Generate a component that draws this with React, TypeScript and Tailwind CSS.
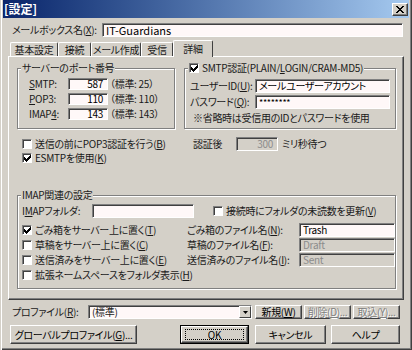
import React from "react";

type Kids = { children?: React.ReactNode };

function U({ children }: Kids) {
  return <span className="underline decoration-1 underline-offset-[1px]">{children}</span>;
}

function Field({
  className = "",
  value = "",
  disabled = false,
  right = false,
}: {
  className?: string;
  value?: string;
  disabled?: boolean;
  right?: boolean;
}) {
  return (
    <div
      className={`flex items-center shrink-0 border border-t-[#808080] border-l-[#808080] border-r-white border-b-white shadow-[inset_1px_1px_0_#404040] ${
        disabled ? "bg-[#d4d0c8] text-[#8c8c8c]" : "bg-[#fff8f8] text-black"
      } ${right ? "justify-end pr-[4px]" : "pl-[3px]"} ${className}`}
    >
      {value}
    </div>
  );
}

function Check({ on = false }: { on?: boolean }) {
  return (
    <span className="w-[10px] h-[10px] shrink-0 bg-white border border-t-[#808080] border-l-[#808080] border-r-white border-b-white shadow-[inset_1px_1px_0_#404040] flex items-center justify-center">
      {on && (
        <svg width="7" height="7" viewBox="0 0 7 7" className="ml-[1px] mt-[1px]">
          <path
            d="M0 2h1v3H0zM1 3h1v3H1zM2 4h1v3H2zM3 3h1v3H3zM4 2h1v3H4zM5 1h1v3H5zM6 0h1v3H6z"
            fill="#000"
          />
        </svg>
      )}
    </span>
  );
}

function Btn({
  children,
  className = "",
  disabled = false,
}: Kids & { className?: string; disabled?: boolean }) {
  return (
    <div
      className={`flex items-center justify-center shrink-0 bg-[#d4d0c8] border border-t-white border-l-white border-r-[#404040] border-b-[#404040] shadow-[inset_-1px_-1px_0_#808080] ${
        disabled ? "text-[#808080] [text-shadow:1px_1px_0_#fff]" : "text-black"
      } ${className}`}
    >
      {children}
    </div>
  );
}

function Group({
  title,
  className = "",
  children,
}: Kids & { title: React.ReactNode; className?: string }) {
  return (
    <div
      className={`relative shrink-0 border border-[#808080] shadow-[inset_1px_1px_0_#fff,1px_1px_0_#fff] ${className}`}
    >
      <div className="absolute -top-[7px] left-[3px] px-[1px] h-[12px] flex items-center bg-[#d4d0c8]">
        {title}
      </div>
      {children}
    </div>
  );
}

function Tab({ children, sel = false, className = "" }: Kids & { sel?: boolean; className?: string }) {
  return sel ? (
    <div
      className={`relative z-10 -mb-px h-[17px] flex items-center justify-center bg-[#d4d0c8] border-t border-l border-r border-t-white border-l-white border-r-[#404040] rounded-t-[2px] ${className}`}
    >
      {children}
    </div>
  ) : (
    <div
      className={`h-[14px] flex items-center justify-center border-t border-l border-r border-t-white border-l-white border-r-[#404040] rounded-t-[2px] ${className}`}
    >
      {children}
    </div>
  );
}

export default function App() {
  return (
    <div className="w-[412px] h-[350px] overflow-hidden whitespace-nowrap bg-[#d4d0c8] text-[#1a1a1a] text-[10px] leading-none tracking-[-0.3px] font-['Noto_Sans_CJK_JP','Noto_Sans',sans-serif] [font-feature-settings:'palt'] shadow-[inset_1px_0_0_#d4d0c8,inset_2px_0_0_#fff,inset_-1px_-1px_0_#404040,inset_-2px_-2px_0_#808080] flex flex-col">
      {/* title bar */}
      <div className="h-[18px] ml-[3px] mr-[3px] flex items-center justify-between bg-linear-to-r from-[#0a246a] to-[#a6caf0]">
        <span className="pl-[1px] text-white text-[12px] font-bold tracking-normal">[設定]</span>
        <div className="mr-[1px] w-[16px] h-[13px] flex items-center justify-center bg-[#d4d0c8] border border-t-white border-l-white border-r-[#404040] border-b-[#404040] shadow-[inset_-1px_-1px_0_#808080]">
          <svg width="8" height="7" viewBox="0 0 8 7">
            <path
              d="M0 0h2v1H0zM6 0h2v1H6zM1 1h2v1H1zM5 1h2v1H5zM2 2h4v1H2zM3 3h2v1H3zM2 4h4v1H2zM1 5h2v1H1zM5 5h2v1H5zM0 6h2v1H0zM6 6h2v1H6z"
              fill="#000"
            />
          </svg>
        </div>
      </div>

      {/* mailbox name */}
      <div className="mt-[5px] h-[14px] flex items-center">
        <span className="ml-[12px] w-[90px]">
          メールボックス名(<U>X</U>):
        </span>
        <Field className="w-[301px] h-[14px] text-[11px] tracking-normal" value="IT-Guardians" />
      </div>

      {/* tabs */}
      <div className="mt-[3px] ml-[10px] flex items-end h-[16px]">
        <Tab className="w-[48px]">基本設定</Tab>
        <Tab className="w-[33px]">接続</Tab>
        <Tab className="w-[50px]">メール作成</Tab>
        <Tab className="w-[32px]">受信</Tab>
        <Tab sel className="w-[40px]">詳細</Tab>
      </div>

      {/* panel */}
      <div className="ml-[8px] w-[396px] h-[244px] border border-t-white border-l-white border-r-[#404040] border-b-[#404040] shadow-[inset_-1px_-1px_0_#808080] flex flex-col">
        <div className="mt-[11px] ml-[8px] flex gap-[9px]">
          <Group title="サーバーのポート番号" className="w-[158px] h-[61px]">
            <div className="pt-[7px] pl-[11px] flex flex-col">
              {[
                [<><U>S</U>MTP:</>, "587", "（標準: 25）"],
                [<><U>P</U>OP3:</>, "110", "（標準: 110）"],
                [<>IMAP<U>4</U>:</>, "143", "（標準: 143）"],
              ].map(([label, v, std], i) => (
                <div key={i} className="h-[15px] flex items-center">
                  <span className="w-[39px]">{label}</span>
                  <Field className="w-[40px] h-[12px]" value={v as string} right />
                  <span className="ml-[2px]">{std}</span>
                </div>
              ))}
            </div>
          </Group>
          <Group
            title={
              <span className="flex items-center gap-[3px]">
                <Check on />
                <span>
                  SMTP認証(PLAIN/<U>L</U>OGIN/CRAM-MD5)
                </span>
              </span>
            }
            className="w-[212px] h-[61px]"
          >
            <div className="pt-[10px] pl-[5px] flex flex-col gap-[2px]">
              <div className="h-[14px] flex items-center">
                <span className="w-[65px]">
                  ユーザーID(<U>U</U>):
                </span>
                <Field className="w-[135px] h-[14px]" value="メールユーザーアカウント" />
              </div>
              <div className="h-[14px] flex items-center">
                <span className="w-[65px]">
                  パスワード(<U>Q</U>):
                </span>
                <Field className="w-[135px] h-[14px] text-[9px]" value="********" />
              </div>
              <div className="h-[14px] flex items-center pl-[3px]">※省略時は受信用のIDとパスワードを使用</div>
            </div>
          </Group>
        </div>

        <div className="mt-[8px] h-[14px] flex items-center">
          <div className="w-[184px] pl-[13px] flex items-center gap-[3px]">
            <Check />
            <span>
              送信の前にPOP3認証を行う(<U>B</U>)
            </span>
          </div>
          <span className="w-[43px]">認証後</span>
          <Field className="w-[42px] h-[14px]" value="300" disabled right />
          <span className="ml-[4px]">ミリ秒待つ</span>
        </div>
        <div className="h-[13px] pl-[13px] flex items-center gap-[3px]">
          <Check on />
          <span>
            ESMTPを使用(<U>K</U>)
          </span>
        </div>

        <Group title="IMAP関連の設定" className="mt-[31px] ml-[8px] w-[379px] h-[94px]">
          <div className="pt-[8px] pl-[4px] flex flex-col">
            <div className="h-[14px] flex items-center">
              <span className="w-[70px]">
                I<U>M</U>APフォルダ:
              </span>
              <Field className="w-[102px] h-[14px]" />
              <div className="ml-[19px] flex items-center gap-[3px]">
                <Check />
                <span>
                  接続時にフォルダの未読数を更新(<U>V</U>)
                </span>
              </div>
            </div>
            <div className="mt-[4px] flex flex-col">
              {[
                [true, "ごみ箱をサーバー上に置く", "T", "ごみ箱のファイル名", "N", "Trash", false],
                [false, "草稿をサーバー上に置く", "C", "草稿のファイル名", "F", "Draft", true],
                [false, "送信済みをサーバー上に置く", "E", "送信済みのファイル名", "I", "Sent", true],
              ].map(([on, l, lk, r, rk, v, dis], i) => (
                <div key={i} className="h-[15px] flex items-center">
                  <div className="w-[165px] flex items-center gap-[3px]">
                    <Check on={on as boolean} />
                    <span>
                      {l as string}(<U>{lk as string}</U>)
                    </span>
                  </div>
                  <span className="w-[112px]">
                    {r as string}(<U>{rk as string}</U>):
                  </span>
                  <Field className="w-[96px] h-[14px]" value={v as string} disabled={dis as boolean} />
                </div>
              ))}
              <div className="h-[15px] flex items-center gap-[3px]">
                <Check />
                <span>
                  拡張ネームスペースをフォルダ表示(<U>H</U>)
                </span>
              </div>
            </div>
          </div>
        </Group>
      </div>

      {/* profile row */}
      <div className="mt-[5px] h-[14px] flex items-center">
        <span className="ml-[12px] w-[76px]">
          プロファイル(<U>R</U>):
        </span>
        <div className="w-[164px] h-[14px] flex items-center border border-t-[#808080] border-l-[#808080] border-r-white border-b-white shadow-[inset_1px_1px_0_#404040] bg-[#fff8f8]">
          <span className="flex-1 pl-[3px]">(標準)</span>
          <div className="w-[12px] h-[12px] flex items-center justify-center bg-[#d4d0c8] border border-t-white border-l-white border-r-[#404040] border-b-[#404040]">
            <svg width="5" height="3" viewBox="0 0 5 3">
              <path d="M0 0h5L2.5 3z" fill="#000" />
            </svg>
          </div>
        </div>
        <div className="ml-[3px] flex gap-[2px]">
          <Btn className="w-[47px] h-[14px]">
            新規(<U>W</U>)
          </Btn>
          <Btn disabled className="w-[47px] h-[14px]">
            削除(<U>D</U>)...
          </Btn>
          <Btn disabled className="w-[47px] h-[14px]">
            取込(<U>Y</U>)...
          </Btn>
        </div>
      </div>

      {/* bottom buttons */}
      <div className="mt-[6px] h-[19px] flex items-center">
        <Btn className="ml-[10px] w-[127px] h-[19px]">
          グローバルプロファイル(<U>G</U>)...
        </Btn>
        <div className="ml-[43px] w-[69px] h-[19px] border border-black">
          <Btn className="w-full h-full">
            <div className="w-[59px] h-[11px] border border-dotted border-black flex items-center justify-center">
              OK
            </div>
          </Btn>
        </div>
        <Btn className="ml-[6px] w-[71px] h-[19px]">キャンセル</Btn>
        <Btn className="ml-[5px] w-[69px] h-[19px]">ヘルプ</Btn>
      </div>
    </div>
  );
}
